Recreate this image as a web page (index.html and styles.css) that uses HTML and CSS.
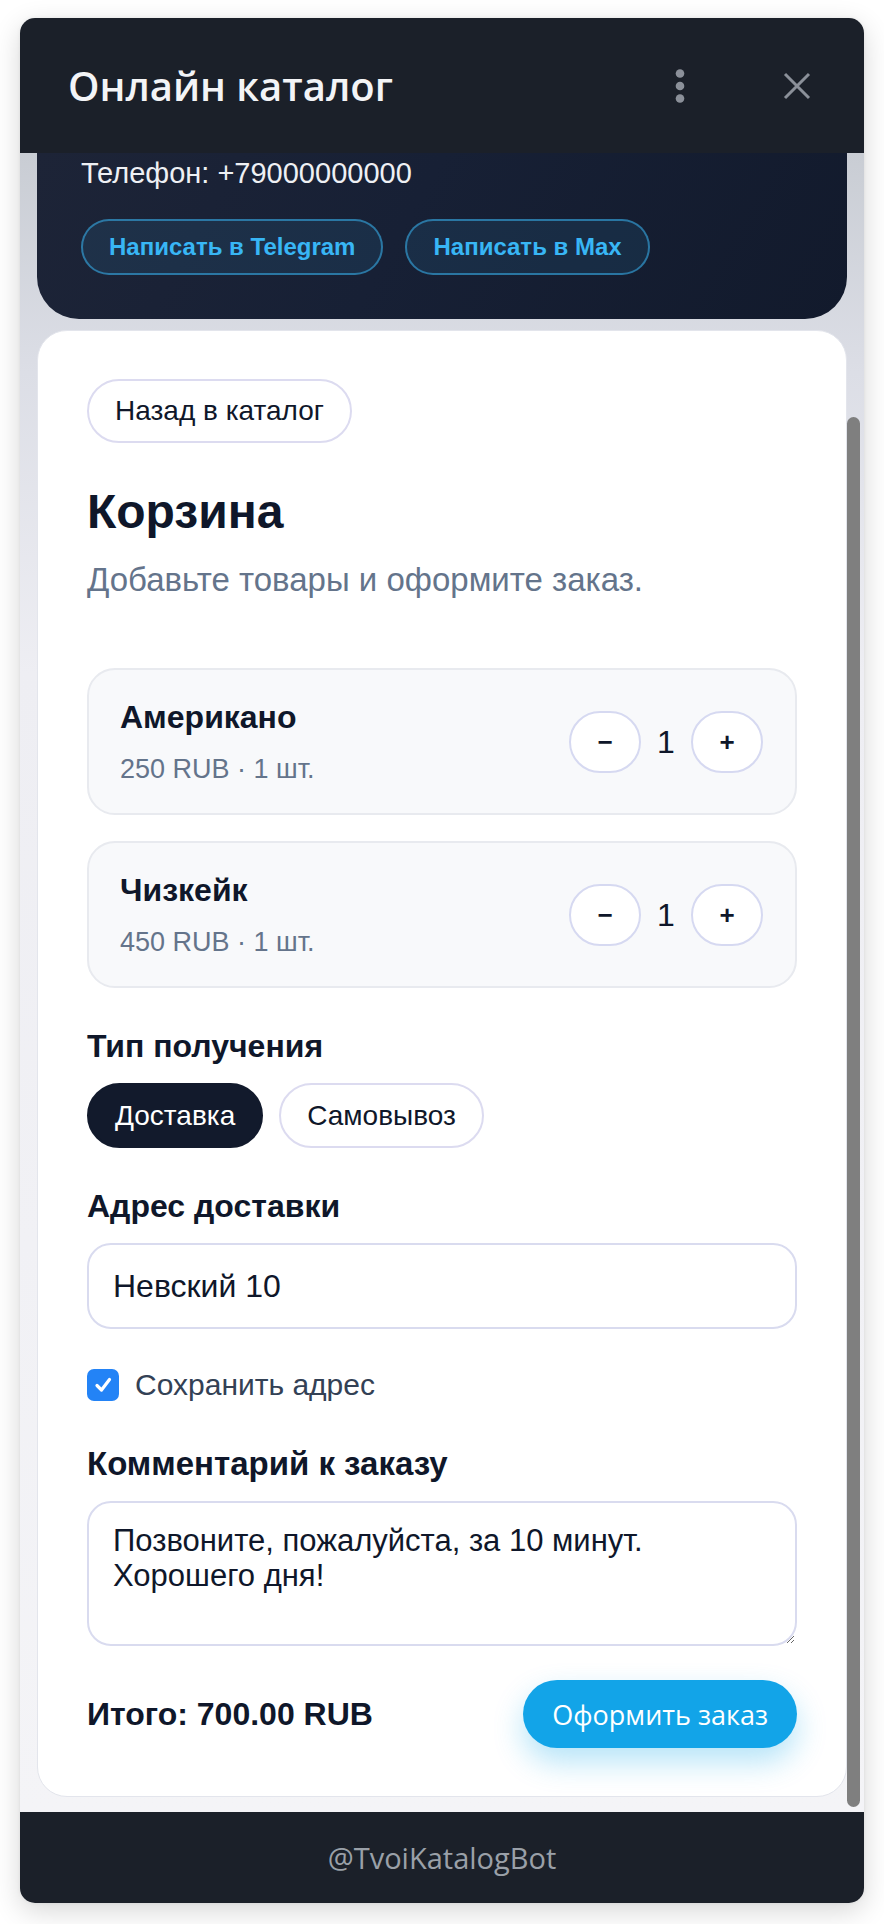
FILE: index.html
```html
<!DOCTYPE html>
<html lang="ru">
<head>
    <meta charset="UTF-8">
    <meta name="viewport" content="width=device-width, initial-scale=1.0">
    <title>Онлайн каталог</title>
    <link rel="stylesheet" href="styles.css">
</head>
<body>
    <div class="app">
        <header class="topbar">
            <h1 class="topbar-title">Онлайн каталог</h1>
            <div class="topbar-actions">
                <svg class="icon-more" width="10" height="34" viewBox="0 0 10 34">
                    <circle cx="5" cy="4.5" r="4.3"/>
                    <circle cx="5" cy="17" r="4.3"/>
                    <circle cx="5" cy="29.5" r="4.3"/>
                </svg>
                <svg class="icon-close" width="28" height="28" viewBox="0 0 28 28">
                    <path d="M2 2 L26 26 M26 2 L2 26"/>
                </svg>
            </div>
        </header>

        <div class="viewport">
            <main class="content">
                <section class="hero">
                    <p class="hero-phone">Телефон: +79000000000</p>
                    <div class="hero-links">
                        <a class="hero-link" href="#">Написать в Telegram</a>
                        <a class="hero-link" href="#">Написать в Max</a>
                    </div>
                </section>

                <section class="cart">
                    <button class="back-btn">Назад в каталог</button>

                    <h2 class="cart-title">Корзина</h2>
                    <p class="cart-subtitle">Добавьте товары и оформите заказ.</p>

                    <div class="cart-items">
                        <div class="cart-item">
                            <div class="item-info">
                                <div class="item-name">Американо</div>
                                <div class="item-meta">250 RUB · 1 шт.</div>
                            </div>
                            <div class="qty">
                                <button class="qty-btn">−</button>
                                <span class="qty-value">1</span>
                                <button class="qty-btn">+</button>
                            </div>
                        </div>
                        <div class="cart-item">
                            <div class="item-info">
                                <div class="item-name">Чизкейк</div>
                                <div class="item-meta">450 RUB · 1 шт.</div>
                            </div>
                            <div class="qty">
                                <button class="qty-btn">−</button>
                                <span class="qty-value">1</span>
                                <button class="qty-btn">+</button>
                            </div>
                        </div>
                    </div>

                    <div class="field-label">Тип получения</div>
                    <div class="toggle-group">
                        <button class="toggle active">Доставка</button>
                        <button class="toggle">Самовывоз</button>
                    </div>

                    <div class="field-label">Адрес доставки</div>
                    <input class="text-input" type="text" value="Невский 10">

                    <label class="check-row">
                        <span class="check-box">
                            <svg width="20" height="20" viewBox="0 0 20 20">
                                <path d="M4 10.5 L8.5 15 L16.5 4.5"/>
                            </svg>
                        </span>
                        Сохранить адрес
                    </label>

                    <div class="field-label label-comment">Комментарий к заказу</div>
                    <textarea class="text-area">Позвоните, пожалуйста, за 10 минут.
Хорошего дня!</textarea>

                    <div class="total-row">
                        <div class="total">Итого: 700.00 RUB</div>
                        <button class="order-btn">Оформить заказ</button>
                    </div>
                </section>
            </main>

            <div class="scrollbar">
                <div class="scrollbar-thumb"></div>
            </div>
        </div>

        <footer class="bottombar">@TvoiKatalogBot</footer>
    </div>
</body>
</html>
```

FILE: styles.css
```css
body {
    margin: 0;
    padding: 18px 20px 21px;
    background-color: #ffffff;
    font-family: 'Liberation Sans', Arial, sans-serif;
    color: #0f172a;
}

.app {
    width: 844px;
    height: 1885px;
    display: flex;
    flex-direction: column;
    border-radius: 15px;
    overflow: hidden;
    box-shadow: 0 8px 28px rgba(0, 0, 0, 0.16), 0 0 4px rgba(0, 0, 0, 0.06);
}

/* Верхняя панель */
.topbar {
    height: 135px;
    flex-shrink: 0;
    background-color: #1b2029;
    display: flex;
    align-items: center;
    justify-content: space-between;
    padding: 0 53px 0 48px;
}

.topbar-title {
    margin: 0;
    font-family: 'Open Sans', sans-serif;
    font-weight: 600;
    font-size: 40px;
    color: #f3f4f6;
}

.topbar-actions {
    display: flex;
    align-items: center;
    gap: 98px;
}

.icon-more circle {
    fill: #8b9099;
}

.icon-close path {
    stroke: #8b9099;
    stroke-width: 3;
    fill: none;
}

/* Прокручиваемая область */
.viewport {
    flex: 1;
    display: flex;
    background: linear-gradient(180deg, #c9cdd4 0px, #dcdee6 220px, #eeeef3 520px, #f4f4f7 100%);
    overflow: hidden;
}

.content {
    flex: 1;
    padding: 0 0 16px 17px;
}

.scrollbar {
    width: 17px;
    flex-shrink: 0;
}

.scrollbar-thumb {
    width: 13px;
    height: 1390px;
    margin-top: 264px;
    border-radius: 7px;
    background-color: #7f7f7f;
}

/* Блок контактов */
.hero {
    background: linear-gradient(120deg, #1d2437 0%, #172035 45%, #121a2c 100%);
    border-radius: 0 0 42px 42px;
    padding: 4px 45px 44px 44px;
}

.hero-phone {
    margin: 0;
    font-size: 29px;
    line-height: 32px;
    color: #eef0f4;
}

.hero-links {
    display: flex;
    gap: 22px;
    margin-top: 30px;
}

.hero-link {
    height: 56px;
    box-sizing: border-box;
    display: flex;
    align-items: center;
    padding: 0 26px;
    border: 2px solid rgba(56, 178, 240, 0.55);
    border-radius: 999px;
    background-color: rgba(56, 178, 240, 0.1);
    color: #38b6f5;
    font-weight: 700;
    font-size: 24px;
    text-decoration: none;
}

/* Корзина */
.cart {
    margin-top: 11px;
    background-color: #ffffff;
    border: 1px solid #e3e5ec;
    border-radius: 30px;
    padding: 48px 49px 48px;
}

.back-btn {
    height: 64px;
    padding: 0 26px;
    border: 2px solid #dcdbf0;
    border-radius: 999px;
    background-color: #ffffff;
    font-family: 'Liberation Sans', Arial, sans-serif;
    font-size: 28px;
    color: #0f172a;
}

.cart-title {
    margin: 41px 0 0;
    font-size: 48px;
    line-height: 55px;
    font-weight: 700;
    color: #0f172a;
}

.cart-subtitle {
    margin: 22px 0 0;
    font-size: 33px;
    line-height: 37px;
    color: #64748b;
}

.cart-items {
    margin-top: 70px;
    display: flex;
    flex-direction: column;
    gap: 26px;
}

.cart-item {
    display: flex;
    align-items: center;
    justify-content: space-between;
    padding: 29px 32px 28px 31px;
    background-color: #f8f9fb;
    border: 2px solid #e8eaef;
    border-radius: 28px;
}

.item-name {
    font-size: 32px;
    line-height: 36px;
    font-weight: 700;
    color: #0f172a;
}

.item-meta {
    margin-top: 18px;
    font-size: 27px;
    line-height: 32px;
    color: #64748b;
}

.qty {
    display: flex;
    align-items: center;
    gap: 16px;
}

.qty-btn {
    width: 72px;
    height: 62px;
    border: 2px solid #d6d9f1;
    border-radius: 999px;
    background-color: #ffffff;
    font-family: 'Liberation Sans', Arial, sans-serif;
    font-size: 26px;
    font-weight: 700;
    color: #0f172a;
    padding: 0;
}

.qty-value {
    min-width: 18px;
    text-align: center;
    font-size: 32px;
    color: #0f172a;
}

/* Поля формы */
.field-label {
    margin-top: 40px;
    font-size: 32px;
    line-height: 37px;
    font-weight: 700;
    color: #0f172a;
}

.label-comment {
    margin-top: 43px;
    font-size: 33px;
}

.toggle-group {
    display: flex;
    gap: 16px;
    margin-top: 18px;
}

.toggle {
    height: 65px;
    padding: 0 26px;
    border: 2px solid #dcdbf0;
    border-radius: 999px;
    background-color: #ffffff;
    font-family: 'Liberation Sans', Arial, sans-serif;
    font-size: 28px;
    color: #0f172a;
}

.toggle.active {
    background-color: #121a2c;
    border-color: #121a2c;
    color: #ffffff;
}

.text-input {
    display: block;
    width: 100%;
    box-sizing: border-box;
    margin-top: 18px;
    height: 86px;
    padding: 0 24px;
    border: 2px solid #d9dbef;
    border-radius: 24px;
    background-color: #ffffff;
    font-family: 'Liberation Sans', Arial, sans-serif;
    font-size: 32px;
    color: #0f172a;
}

.check-row {
    display: flex;
    align-items: center;
    gap: 16px;
    margin-top: 39px;
    font-size: 30px;
    line-height: 34px;
    color: #334155;
}

.check-box {
    width: 32px;
    height: 32px;
    border-radius: 7px;
    background-color: #2383f6;
    display: flex;
    align-items: center;
    justify-content: center;
}

.check-box path {
    fill: none;
    stroke: #ffffff;
    stroke-width: 3.2;
    stroke-linecap: round;
    stroke-linejoin: round;
}

.text-area {
    display: block;
    width: 100%;
    box-sizing: border-box;
    margin-top: 19px;
    height: 145px;
    padding: 20px 24px;
    border: 2px solid #d9dbef;
    border-radius: 24px;
    background-color: #ffffff;
    font-family: 'Liberation Sans', Arial, sans-serif;
    font-size: 31px;
    line-height: 35px;
    color: #0f172a;
}

.total-row {
    display: flex;
    align-items: center;
    justify-content: space-between;
    margin-top: 34px;
}

.total {
    font-size: 32px;
    font-weight: 700;
    color: #0f172a;
}

.order-btn {
    height: 68px;
    padding: 0 29px;
    border: none;
    border-radius: 999px;
    background-color: #12a4e8;
    color: #ffffff;
    font-family: 'Open Sans', sans-serif;
    font-size: 27px;
    font-weight: 500;
    box-shadow: 0 14px 30px rgba(14, 165, 233, 0.3);
}

/* Нижняя панель */
.bottombar {
    height: 91px;
    flex-shrink: 0;
    background-color: #1b2029;
    display: flex;
    align-items: center;
    justify-content: center;
    font-family: 'Open Sans', sans-serif;
    font-size: 29px;
    color: #9aa0a8;
}
```
